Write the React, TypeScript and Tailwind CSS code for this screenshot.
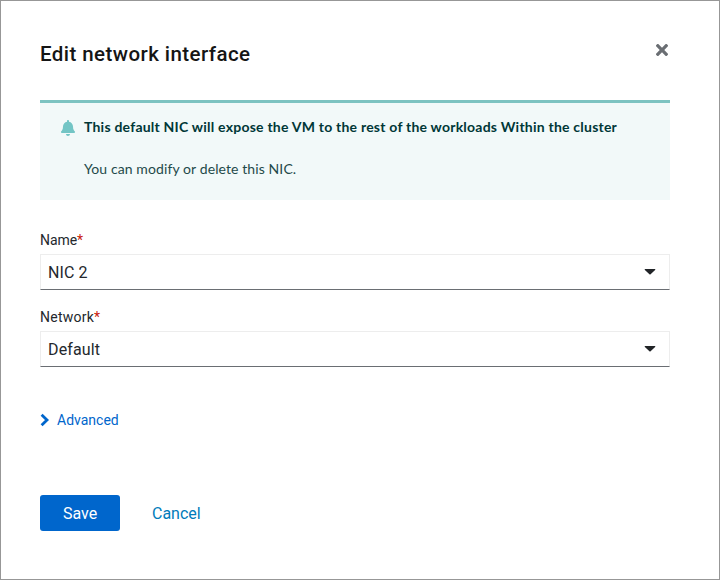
import { FaBell, FaTimes } from "react-icons/fa";

function CaretDown() {
  return (
    <svg viewBox="0 0 12 6" className="mb-[1px] h-[6px] w-3 text-[#212427]" fill="currentColor" aria-hidden="true">
      <path d="M1.3 0h9.4c.6 0 .8.6.4 1L6.6 5.3a.85.85 0 0 1-1.2 0L.9 1C.5.6.7 0 1.3 0Z" />
    </svg>
  );
}

function SelectField({ label, value, labelClass, valueClass }: { label: string; value: string; labelClass: string; valueClass: string }) {
  return (
    <div className="flex flex-col">
      <label className="flex h-[21px] items-center pt-[2px] text-[14px] leading-[21px] text-[#24282d]">
        <span className={labelClass}>{label}</span>
        <span className="text-[#c9190b]">*</span>
      </label>
      <button
        type="button"
        className="mt-1 flex h-9 w-full items-center justify-between border border-[#ededed] border-b-[#6a6e73] bg-white pr-[13px] pl-[7px] text-[16px] leading-6 text-[#24282d]"
      >
        <span className={valueClass}>{value}</span>
        <CaretDown />
      </button>
    </div>
  );
}

export default function App() {
  return (
    <main className="flex h-[580px] w-[720px] flex-col border border-[#979797] bg-white pr-[49px] pl-[39px] font-[Roboto,sans-serif]">
      <header className="flex h-[99px] items-start justify-between">
        <h1 className="mt-[38px] text-[20.5px] leading-[30px] font-medium tracking-[0.43px] text-[#151515]">Edit network interface</h1>
        <button type="button" aria-label="Close" className="mt-[39px] mr-[2px] text-[#6a6e73]">
          <FaTimes className="h-5 w-3" />
        </button>
      </header>

      <section className="flex h-[100px] border-t-[3px] border-[#7dc3c1] bg-[#f2f9f9] pl-[21px] font-[Lato,sans-serif] text-[14px] leading-[21px] text-[#003737]">
        <FaBell className="mt-[17px] h-4 w-[14px] shrink-0 text-[#73c5c5]" />
        <div className="pt-[13px] pl-[9px]">
          <h2 className="font-bold whitespace-nowrap tracking-[0.225px]">
            This default NIC will expose the VM to the rest of the workloads Within the cluster
          </h2>
          <p className="mt-[21px] whitespace-nowrap tracking-[0.1px] text-[#1f4a4a]">You can modify or delete this NIC.</p>
        </div>
      </section>

      <form className="mt-[29px] flex flex-col gap-4">
        <SelectField label="Name" value="NIC 2" labelClass="tracking-[-0.05px]" valueClass="pt-[2px] tracking-[0.1px]" />
        <SelectField label="Network" value="Default" labelClass="tracking-[0.25px]" valueClass="pt-[2px] tracking-[0.15px]" />
      </form>

      <button type="button" className="mt-[43px] flex h-[21px] items-center self-start text-[14px] leading-[21px] text-[#0066cc]">
        <svg viewBox="0 0 10 14" className="mr-[7px] mb-[2px] h-[14px] w-[10px]" fill="none" stroke="currentColor" strokeWidth="2.8" aria-hidden="true">
          <path d="m1.6 1.8 5.4 5.2-5.4 5.2" />
        </svg>
        <span>Advanced</span>
      </button>

      <footer className="mt-[64px] flex h-9 items-center text-[16px] leading-6">
        <button type="button" className="h-9 w-20 rounded-[3px] bg-[#0066cc] pt-[2px] text-white">Save</button>
        <button type="button" className="ml-8 pt-[2px] text-[#007bba]">Cancel</button>
      </footer>
    </main>
  );
}
